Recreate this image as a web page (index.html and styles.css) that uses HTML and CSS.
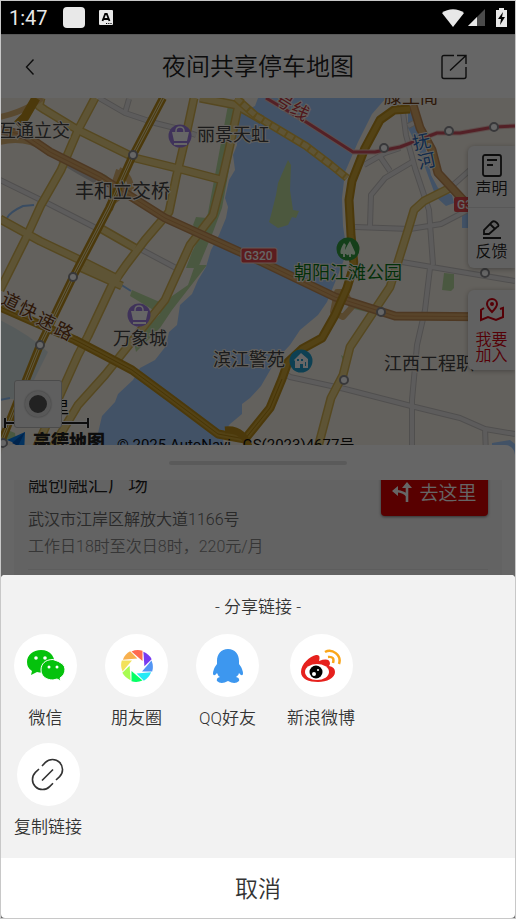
FILE: index.html
```html
<!DOCTYPE html>
<html lang="zh-CN">
<head>
<meta charset="utf-8">
<meta name="viewport" content="width=device-width, initial-scale=1">
<title>夜间共享停车地图</title>
<link rel="stylesheet" href="styles.css">
</head>
<body>
<div class="statusbar">
  <span class="clock">1:47</span>
  <span class="status-square"></span>
  <svg class="status-a" width="14" height="16" viewBox="0 0 14 16"><rect width="14" height="15" rx="1" fill="#e8e8e8"/><path d="M3.5 11 6.2 4h1.6l2.7 7M4.8 9h4.4" fill="none" stroke="#000" stroke-width="1.8"/><path d="M7 13.500h1.200m1 0h1.200m1 0h1.200" stroke="#000" stroke-width="1.200"/></svg>
  <span class="status-icons">
    <svg width="22" height="18" viewBox="0 0 22 18"><path d="M0 4C6-1 16-1 22 4L11 18Z" fill="#e8e8e8"/></svg>
    <svg width="17" height="17" viewBox="0 0 17 17"><path d="M17 0V17H0Z" fill="#4a4a4a"/><path d="M9 8V17H0Z" fill="#e8e8e8"/></svg>
    <svg width="11" height="19" viewBox="0 0 11 19"><path d="M3 2V0h5v2h3v17H0V2Z" fill="#e8e8e8"/><path d="M7 4 2 11h3l-1 6 5-8H6Z" fill="#000"/></svg>
  </span>
</div>

<main class="app">
  <header class="header">
    <button class="icon-btn" aria-label="返回"><svg width="10" height="16" viewBox="0 0 10 16"><path d="M8.500 0.500 1.500 8l7 7.500" fill="none" stroke="#222" stroke-width="1.400"/></svg></button>
    <h1>夜间共享停车地图</h1>
    <button class="icon-btn" aria-label="分享"><svg width="26" height="26" viewBox="0 0 26 26" fill="none" stroke="#222" stroke-width="1.400"><path d="M13 1.500H3Q1 1.500 1 3.500V22.500Q1 24.500 3 24.500H23Q25 24.500 25 22.500V13M16 1.500H25V10M25 1.500 9 16.500"/></svg></button>
  </header>

  <section class="map">
    <svg class="map-canvas" viewBox="1 98 514 357" preserveAspectRatio="xMidYMin slice">
      <rect x="-400" y="98" width="1400" height="357" fill="#f8f2e8"/>
      <path d="M0 320Q30 335 48 352L24 400Q10 398 0 400Z" fill="#d8e4e4"/>
      <g fill="#b9dca0">
        <path d="M228 105 240 110 222 208 213 232 198 268H186L192 252 200 236 193 225 196 217 207 218Z"/>
        <path d="M132 290 162 303 188 285 195 265H207L172 310 160 328 136 352 134 342 160 314 130 296Z"/>
        <path d="M444 273 454 274V288L451 291 442 290ZM341 355 346 358 343 361Z"/>
        <path d="M92 170 106 175 114 183 105 181ZM358 305 375 308V314L350 308ZM5 429 15 433 16 440H5Z"/>
      </g>
      <path d="M258 98H386L372 114 358 142 345 172 342 198 343 226 347 252 338 275 327 302 318 315 300 330 290 345 276 360 261 386 250 398 242 404 242 414 230 424 222 434 226 455H78L98 433 102 416 115 402 118 394 133 380 140 368 155 360 166 346 169 332 177 325 180 305 192 294 198 280 206 267 211 250 219 235 226 218 228 207 225 198 229 180 235 170 233 155 237 145 235 128 242 112 255 106Z" fill="#a5cdff"/>
      <path d="M408 110H414L419 130 424 140 431 175 438 188 452 195 454 203 446 206 436 197 426 170 419 150 408 128ZM462 213H475V228H462ZM492 443 510 440 515 444V455H492Z" fill="#a5cdff"/>
      <path d="M288 160 291 165 290 190 293 210 299 211 296 218 292 217 288 225 278 228 269 222 271 215 276 195 278 183Z" fill="#bddc9c"/>
      <path d="M7 218Q10 212 23 206L34 205M0 400 10 398M120 284 131 291M27 233 80 260" fill="none" stroke="#8fbef4" stroke-width="2"/>
      <g fill="none" stroke-linejoin="round">
        <path d="M0 180 45 202 96 228M99 98 125 113 155 123 175 128 196 135M125 113 129 99M60 160 80 172 96 181M142 250 176 268M403 112 406 135 415 168 429 210 433 265M355 227 410 229 441 224 468 210M370 226 371 195 385 178 412 162M379 155 390 171M364 165 385 153 400 148M408 126 416 122M452 186 470 170M402 262 515 281M430 268 425 310 417 345 412 400 412 455M283 372 290 377 345 389 415 407 460 418 485 429 515 434M485 428 486 455" stroke="#c8c5c4" stroke-width="6"/>
        <path d="M0 180 45 202 96 228M99 98 125 113 155 123 175 128 196 135M125 113 129 99M142 250 176 268M403 112 406 135 415 168 429 210 433 265M355 227 410 229 441 224 468 210M370 226 371 195 385 178 412 162M379 155 390 171M364 165 385 153 400 148M408 126 416 122M452 186 470 170M402 262 515 281M430 268 425 310 417 345 412 400 412 455M283 372 290 377 345 389 415 407 460 418 485 429 515 434M485 428 486 455" stroke="#e9e7e6" stroke-width="4"/>
        <path d="M41 98 39 106 45 110 78 130 135 158 180 169 222 180M95 98 78 130 61 170 41 205 25 240 0 290M194 98 185 140 176 178 169 212 145 240 126 265 112 285 88 336 78 355 60 395 33 455M240 98 230 145 222 180 213 215 190 245 165 300 145 325 105 375 78 405 48 455M0 219 40 241 80 260 120 280M100 228 135 248M75 265 82 268 122 286M200 98 236 105 262 120M450 188 424 201 414 210 408 230 397 265 390 287 350 347 343 375 331 398 316 455" stroke="#d6b452" stroke-width="9"/>
        <path d="M41 98 39 106 45 110 78 130 135 158 180 169 222 180M95 98 78 130 61 170 41 205 25 240 0 290M194 98 185 140 176 178 169 212 145 240 126 265 112 285 88 336 78 355 60 395 33 455M240 98 230 145 222 180 213 215 190 245 165 300 145 325 105 375 78 405 48 455M0 219 40 241 80 260 120 280M100 228 135 248M75 265 82 268 122 286M200 98 236 105 262 120M450 188 424 201 414 210 408 230 397 265 390 287 350 347 343 375 331 398 316 455" stroke="#ecd385" stroke-width="6"/>
        <path d="M236 98 256 116 306 146 331 165 347 178" stroke="#e0b848" stroke-width="8"/><path d="M236 98 256 116 306 146 331 165 347 178" stroke="#ecd385" stroke-width="5" stroke-dasharray="7 2"/>
        <path d="M0 117Q18 113 32 105L42 98M0 142Q25 136 45 149M119 170Q130 175 131 188L111 203M119 170 113 188 110 210M337 292 345 292 352 307 343 317 333 312Z" stroke="#dfb675" stroke-width="6"/>
        <path d="M0 130 25 135 50 152 100 177 165 218 240 252 262 262 335 297 395 316 515 317M413 105 420 128 432 150 438 173 452 188 466 203" stroke="#c38d55" stroke-width="9"/>
        <path d="M0 130 25 135 50 152 100 177 165 218 240 252 262 262 335 297 395 316 515 317M413 105 420 128 432 150 438 173 452 188 466 203" stroke="#dcaa6a" stroke-width="6"/>
        <path d="M0 130 25 135 50 152 100 177 165 218 240 252 262 262 335 297 395 316 515 317" stroke="#cc9354" stroke-width="1"/>
        <path d="M0 307 75 340 100 353 132 370 170 398 218 434 245 439 270 408 282 379 288 362 302 349 322 338 335 315 347 288 354 265 351 235 349 200 352 181 365 148 380 120 394 110 410 109M36 98 25 117 17 125" stroke="#bd901c" stroke-width="9"/>
        <path d="M0 307 75 340 100 353 132 370 170 398 218 434 245 439 270 408 282 379 288 362 302 349 322 338 335 315 347 288 354 265 351 235 349 200 352 181 365 148 380 120 394 110 410 109" stroke="#cfa535" stroke-width="5"/>
        <path d="M0 307 75 340 100 353 132 370 170 398 218 434 245 439 270 408 282 379" stroke="#b18310" stroke-width="1"/>
        <path d="M225 430Q244 428 250 450" stroke="#bd901c" stroke-width="7"/>
        <path d="M163 98 133 155 109 208 73 277 40 345 0 445" stroke="#bd901c" stroke-width="8"/>
        <path d="M163 98 133 155 109 208 73 277 40 345 0 445" stroke="#ecdca0" stroke-width="3"/>
        <path d="M163 98 133 155 109 208 73 277 40 345 0 445" stroke="#b88914" stroke-width="1"/>
        <path d="M266 98 303 120 353 152 375 152 400 147 437 133 460 133 494 127 515 126" stroke="#eac2bd" stroke-width="5"/>
        <path d="M266 98 303 120 353 152 375 152 400 147 437 133 460 133 494 127 515 126" stroke="#d05260" stroke-width="3"/>
      </g>
      <g fill="#fff" stroke="#8c8c91" stroke-width="2"><circle cx="133" cy="155" r="4"/><circle cx="73" cy="277" r="4"/><circle cx="40" cy="345" r="4"/><circle cx="3" cy="443" r="4"/><circle cx="384" cy="148" r="4"/><circle cx="449" cy="131" r="4"/><circle cx="494" cy="127" r="4"/><circle cx="485" cy="273" r="4"/><circle cx="381" cy="312" r="4"/><circle cx="344" cy="380" r="4"/></g>
      <g>
        <circle cx="180" cy="136" r="11.500" fill="#9d7de0"/><path d="M172 132H189L187 141H174ZM174 143H187V145H174Z" fill="#fff"/><path d="M176 133V131Q176 127 180 127T184 131V133" fill="none" stroke="#fff" stroke-width="1.500"/>
        <circle cx="139" cy="315" r="11.500" fill="#9d7de0"/><path d="M131 311H148L146 320H133ZM133 322H146V324H133Z" fill="#fff"/><path d="M135 312V310Q135 306 139 306T143 310V312" fill="none" stroke="#fff" stroke-width="1.500"/>
      </g>
      <circle cx="348" cy="249" r="11.500" fill="#329d42"/><path d="M350 241Q345 248 345 253Q348 257 349 254V257H351V254Q356 256 355 252ZM344 243Q339 251 341 254H343V257H345V254H347Q344 250 346 245Z" fill="#e7ffe4"/>
      <circle cx="301" cy="361" r="11.500" fill="#23a1cf"/><path d="M294 360 301 353 308 359V368H303V364H300V368H295V361Z" fill="#fff"/><path d="M297 359H299V361H297ZM301 359H303V361H301ZM305 362H306V366H305Z" fill="#23a1cf"/>
      <rect x="241" y="248" width="36" height="15" rx="2" fill="#e5484c" stroke="#ffdad0"/><rect x="454" y="197" width="36" height="15" rx="2" fill="#e5484c"/>
      <g class="road-code"><text x="244" y="260">G320</text><text x="457" y="209">G3</text></g>
      <g class="map-label">
        <text x="-2" y="137">互通立交</text><text x="197" y="141">丽景天虹</text><text x="75" y="198" class="large">丰和立交桥</text><text x="113" y="345">万象城</text><text x="213" y="366">滨江警苑</text><text x="384" y="370">江西工程职</text>
        <text x="294" y="279" class="park">朝阳江滩公园</text><text x="384" y="103" class="scenic">滕王阁</text>
        <g class="water-name"><text transform="translate(414 150) rotate(-12)">抚</text><text transform="translate(419 169) rotate(-12)">河</text></g>
        <g class="metro"><text transform="translate(273 102) rotate(32)">号</text><text transform="translate(289 112) rotate(32)">线</text></g>
        <g class="scenic"><text transform="translate(0 303) rotate(26)">道</text><text transform="translate(17 312) rotate(26)">快</text><text transform="translate(35 323) rotate(26)">速</text><text transform="translate(53 333) rotate(26)">路</text></g>
        <text x="53" y="413" class="scale">里</text>
      </g>
      <path d="M5 423H88M5 418V428M88 418V428" fill="none" stroke="#fff" stroke-width="4"/><path d="M5 423H88M5 418V428M88 418V428" fill="none" stroke="#222" stroke-width="2"/>
      <path d="M7 440 25 432 24 455 17 444Z" fill="#087ff0"/><path d="M25 432 12 443 18 446Z" fill="#005bc1"/>
      <text x="33" y="448" class="brand">高德地图</text><text x="117" y="450" class="copyright">© 2025 AutoNavi - GS(2023)4677号</text>
    </svg>
    <button class="locate" aria-label="定位"><span class="locate-dot"></span></button>
    <nav class="tools">
      <div class="tool-card">
        <button class="tool"><svg width="20" height="23" viewBox="0 0 20 23" fill="none" stroke="#222" stroke-width="1.800"><rect x="1" y="1" width="18" height="21" rx="2"/><path d="M5 6H15M5 11H11"/></svg>声明</button>
        <button class="tool feedback"><svg width="20" height="20" viewBox="0 0 20 20" fill="none" stroke="#222" stroke-width="1.800"><path d="M1 18H19M2 14V10L10 2Q12 0 15 3T15 7L7 14ZM8 4 13 9"/></svg>反馈</button>
      </div>
      <button class="tool-card tool join"><svg width="24" height="24" viewBox="0 0 24 24" fill="none" stroke="#d40010" stroke-width="2"><path d="M12 14Q7 9 7 6A5 5 0 0 1 17 6Q17 9 12 14ZM4 10 1 12V22L8 19 16 22 23 19V10L20 11"/><circle cx="12" cy="6" r="1"/></svg><span>我要<br>加入</span></button>
    </nav>
  </section>

  <section class="panel">
    <div class="handle"></div>
    <div class="results">
      <article class="place">
        <div class="place-info"><h2>融创融汇广场</h2><p>武汉市江岸区解放大道1166号</p><p>工作日18时至次日8时，220元/月</p></div>
        <button class="go"><svg width="20" height="20" viewBox="0 0 20 20" fill="none" stroke="#fff" stroke-width="2.600"><path d="M15 20V4M15 14Q13 10 4 9"/><path d="M15 0 20 6H10ZM0 9 6 4V14Z" fill="#fff" stroke="none"/></svg>去这里</button>
      </article>
    </div>
  </section>

  <div class="scrim"></div>

  <section class="sheet" role="dialog" aria-labelledby="share-title">
    <div class="share">
      <h2 id="share-title">- 分享链接 -</h2>
      <div class="share-row">
        <button class="share-item"><span class="disc"><svg width="38" height="32" viewBox="0 0 38 32"><path d="M14 0C6 0 0 5 0 12Q0 18 5 21L4 25 10 22Q20 24 25 18T25 5Q21 0 14 0Z" fill="#05c20c"/><path d="M26 9.500C18 9.500 14 14 14 20S19 30 26 30L30 29 34 31 33 28Q38 25 38 19T26 9.500Z" fill="#05c20c" stroke="#fff"/><g fill="#fff"><circle cx="9" cy="8" r="1.800"/><circle cx="18" cy="8" r="1.800"/><circle cx="22" cy="17" r="1.500"/><circle cx="30" cy="17" r="1.500"/></g></svg></span>微信</button>
        <button class="share-item"><span class="disc"><svg width="32" height="32" viewBox="-16 -16 32 32"><defs><path id="blade" d="M14.500-5.500A16 16 0 0 1 15.200 5.500H5Z"/></defs><use href="#blade" fill="#5295f4"/><use href="#blade" transform="rotate(45)" fill="#23e9f5"/><use href="#blade" transform="rotate(90)" fill="#05ff65"/><use href="#blade" transform="rotate(135)" fill="#a8fc52"/><use href="#blade" transform="rotate(180)" fill="#f2e15a"/><use href="#blade" transform="rotate(225)" fill="#f8b04e"/><use href="#blade" transform="rotate(270)" fill="#ff6a50"/><use href="#blade" transform="rotate(315)" fill="#783af0"/></svg></span>朋友圈</button>
        <button class="share-item"><span class="disc"><svg width="30" height="34" viewBox="0 0 30 34"><path d="M15 0C8 0 4 5 4 12V15Q0 20 0 25Q1 28 4 24Q5 27 7 28Q3 29 4 32Q8 36 15 32Q22 36 26 32Q27 29 23 28Q26 26 26 24Q29 28 30 25Q30 20 26 15V12C26 5 22 0 15 0Z" fill="#3d97ef"/></svg></span>QQ好友</button>
        <button class="share-item"><span class="disc"><svg width="40" height="34" viewBox="0 0 40 34"><path d="M15 6Q20 5 18 12Q29 8 29 15L28 17Q34 18 34 23C34 29 26 33 17 33S0 30 0 23C0 15 9 7 15 6Z" fill="#e6211d"/><ellipse cx="16" cy="23" rx="12" ry="8" fill="#fff"/><circle cx="15" cy="23" r="6.500"/><circle cx="13" cy="25" r="2" fill="#fff"/><circle cx="17" cy="21" r="1" fill="#fff"/><path d="M24 3C31-1 41 6 38 15M27 8Q34 7 32 14" fill="none" stroke="#faa61a" stroke-width="2.500"/></svg></span>新浪微博</button>
      </div>
      <div class="share-row">
        <button class="share-item"><span class="disc"><svg width="34" height="34" viewBox="0 0 34 34" fill="none" stroke="#333" stroke-width="1.600"><path d="M11 8 14.400 4.400A10 10 0 0 1 28.600 18.600L25 22M22 25.200 18.600 28.600A10 10 0 0 1 4.400 14.400L8 11M11 22.500 22 11.500"/></svg></span>复制链接</button>
      </div>
    </div>
    <button class="cancel">取消</button>
  </section>
</main>
</body>
</html>
```

FILE: styles.css
```css
* { box-sizing: border-box; }
html { height: 100%; }
body {
  display: flex;
  flex-direction: column;
  height: 100%;
  margin: 0;
  border: 1px solid #c8c8c8;
  background: #000;
  color: #333;
  font-family: Roboto, "Noto Sans CJK SC", sans-serif;
  font-weight: 350;
}
h1, h2, p { margin: 0; font-weight: inherit; }
button { border: 0; padding: 0; background: none; color: inherit; font: inherit; }
svg { display: block; flex: none; }

.statusbar { display: flex; flex: none; align-items: center; height: 33px; padding: 0 8px; color: #e8e8e8; font-weight: 400; }
.clock { font-size: 20px; }
.status-square { width: 22px; height: 21px; margin: 0 14px 0 15px; border-radius: 4px; background: #e8e8e8; }
.status-icons { display: flex; align-items: center; gap: 4px; margin-left: auto; }
.status-icons svg:last-child { margin-left: 7px; }

.app { position: relative; display: flex; flex: 1; flex-direction: column; min-height: 0; overflow: hidden; background: #fff; }
.header { display: grid; flex: none; grid-template-columns: 1fr auto 1fr; align-items: center; height: 64px; padding: 0 16px; border-top: 1px solid #ddd; }
.header h1 { font-size: 24px; line-height: 32px; color: #222; }
.icon-btn { display: flex; justify-content: center; width: 26px; }
.header .icon-btn:last-child { justify-self: end; margin-right: 32px; }

.map { position: relative; flex: none; height: 357px; overflow: hidden; }
.map-canvas { width: 100%; height: 100%; }
.map-label { fill: #444; font-size: 18px; stroke: #f8f2e8; stroke-width: 2px; paint-order: stroke; font-weight: 400; }
.map-label .large { font-size: 19px; }
.map-label .park { fill: #087818; }
.map-label .scenic { fill: #713b12; }
.map-label .water-name { fill: #286abd; }
.map-label .metro { fill: #c53945; }
.map-label .scale { fill: #111; font-size: 16px; }
.road-code { fill: #fff; font-size: 12px; font-weight: 500; }
.brand { font-size: 18px; font-weight: 900; fill: #222; }
.copyright { font-size: 15px; font-weight: 400; fill: #111; }

.locate { position: absolute; left: 13px; top: 282px; display: grid; place-items: center; width: 48px; height: 48px; border: 1px solid #bbb; border-radius: 3px; background: #eee; }
.locate-dot { width: 26px; height: 26px; border: 4px solid #ddd; border-radius: 50%; background: #555; box-shadow: 0 0 2px #888; }
.tools { position: absolute; top: 48px; right: 0; display: grid; gap: 22px; width: 47px; }
.tool-card { border-radius: 6px 0 0 6px; background: #f3f3f3; box-shadow: 0 1px 5px rgba(0, 0, 0, .3); }
.tool { display: flex; flex-direction: column; align-items: center; width: 100%; height: 61px; padding-top: 8px; color: #222; font-size: 16px; line-height: 24px; }
.feedback { padding-top: 12px; border-top: 1px solid #ddd; }
.join { height: 80px; color: #d40010; line-height: 16px; gap: 10px; }

.panel { position: relative; flex: 1; min-height: 0; margin-top: -10px; padding: 16px 13px 0; border-radius: 10px 10px 0 0; background: #fff; }
.handle { width: 178px; height: 4px; margin: 0 auto 15px; border-radius: 2px; background: #e2e2e2; }
.results { height: 100%; overflow: hidden; padding: 0 14px; background: #f7f7f7; }
.place { display: flex; align-items: flex-start; justify-content: space-between; margin-top: -9px; padding-bottom: 9px; border-bottom: 1px solid #e8e8e8; }
.place-info { flex: 1; font-size: 16px; line-height: 27px; color: #666; }
.place h2 { margin-bottom: 7px; font-size: 20px; line-height: 28px; color: #222; }
.place p + p { color: #888; }
.go { display: flex; align-items: center; justify-content: center; gap: 7px; width: 107px; height: 45px; padding-bottom: 4px; border-radius: 4px; background: #dc0000; box-shadow: 0 1px 3px rgba(0, 0, 0, .5); color: #fff; font-size: 19px; }

.scrim { position: absolute; inset: 0; background: rgba(0, 0, 0, .6); }

.sheet { position: absolute; right: 0; bottom: 0; left: 0; overflow: hidden; border-radius: 4px; background: #fff; }
.share { padding: 20px 13px 19px; background: #f2f2f2; }
.share h2 { margin-bottom: 15px; font-size: 17px; line-height: 24px; text-align: center; }
.share-row { display: flex; gap: 28px; }
.share-row + .share-row { margin-top: 13px; }
.share-item { display: flex; flex-direction: column; align-items: center; gap: 9px; min-width: 63px; font-size: 17px; line-height: 24px; }
.disc { display: grid; place-items: center; width: 63px; height: 63px; border-radius: 50%; background: #fff; }
.cancel { display: block; width: 100%; height: 60px; padding-top: 4px; font-size: 23px; line-height: 56px; }
```
